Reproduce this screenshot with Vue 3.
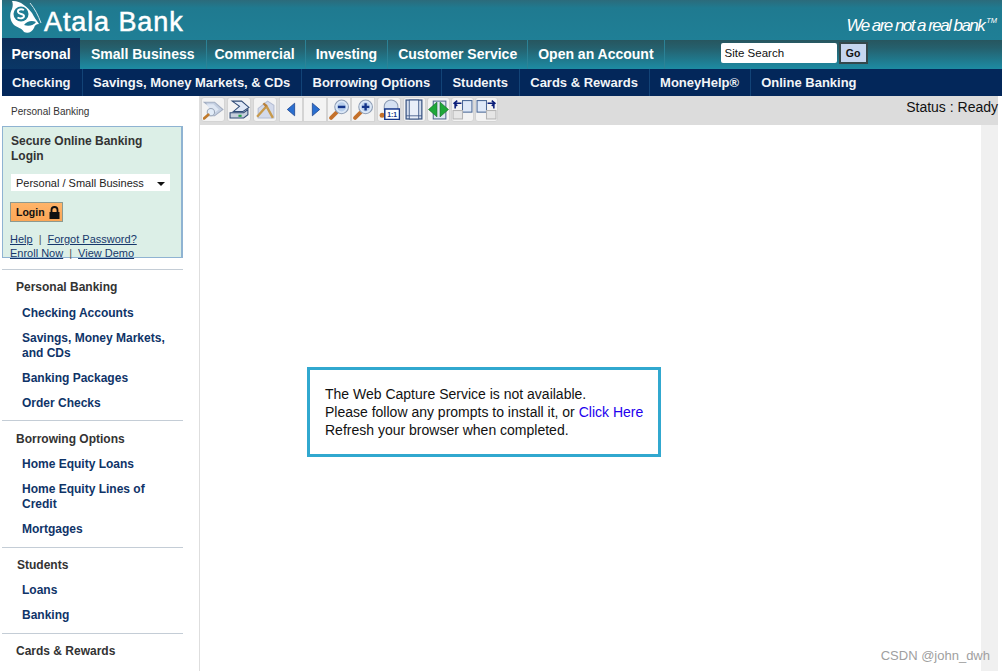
<script setup>
const topTabs = ['Small Business', 'Commercial', 'Investing', 'Customer Service', 'Open an Account']
const subTabs = ['Checking', 'Savings, Money Markets, & CDs', 'Borrowing Options', 'Students', 'Cards & Rewards', 'MoneyHelp®', 'Online Banking']
const sections = [
  { title: 'Personal Banking', links: ['Checking Accounts', 'Savings, Money Markets, and CDs', 'Banking Packages', 'Order Checks'] },
  { title: 'Borrowing Options', links: ['Home Equity Loans', 'Home Equity Lines of Credit', 'Mortgages'] },
  { title: 'Students', links: ['Loans', 'Banking'] },
  { title: 'Cards & Rewards', links: [] }
]
</script>

<template>
  <div class="page">
    <header class="masthead">
      <div class="brand">
        <svg class="logo" width="34" height="34" viewBox="0 0 34 34">
          <path d="M3 1 C10 0 18 6 23 13 C25 17 28 21 30 24 C27 24 26 25 25 28 C23 32 19 34 15 32 C13 28 9 28 5 25 C1 21 0 14 3 9 C4 6 4 3 3 1 Z" fill="#fff"/>
          <circle cx="12" cy="14" r="7.500" fill="#1f7d94"/>
          <path d="M15 10 C12 8.500 8.500 9.500 9 12 C9.500 14.500 15 13.500 15 16 C15 18.500 11 19 8.500 17.500" fill="none" stroke="#fff" stroke-width="1.900"/>
          <path d="M15 25 C18 21 23 20 27 22 C25 25 20 27 15 25 Z" fill="#1f7d94"/>
          <path d="M21 3 C26 9 29 15 32 23" fill="none" stroke="#d7e8ec" stroke-width="1"/>
        </svg>
        <span class="brand-name">Atala Bank</span>
      </div>
      <div class="tagline">We are not a real bank<sup>TM</sup></div>
    </header>

    <nav class="tabs">
      <a class="tab active">Personal</a>
      <a v-for="t in topTabs" :key="t" class="tab">{{ t }}</a>
      <form class="search" @submit.prevent>
        <span class="search-box">Site Search</span>
        <span class="go">Go</span>
      </form>
    </nav>

    <nav class="subtabs">
      <a v-for="t in subTabs" :key="t" class="subtab">{{ t }}</a>
    </nav>

    <div class="body">
      <aside class="sidebar">
        <div class="crumb">Personal Banking</div>
        <section class="login">
          <h2>Secure Online Banking Login</h2>
          <div class="select"><span>Personal / Small Business</span><i class="caret"></i></div>
          <button class="login-btn" type="button">
            Login
            <svg width="11" height="13" viewBox="0 0 11 13"><path d="M2.500 6 V4 a3 3 0 0 1 6 0 V6" fill="none" stroke="#111" stroke-width="1.800"/><rect x="0.500" y="6" width="10" height="7" fill="#111"/></svg>
          </button>
          <div class="login-links">
            <div><a>Help</a><span class="pipe">|</span><a>Forgot Password?</a></div>
            <div><a>Enroll Now</a><span class="pipe">|</span><a>View Demo</a></div>
          </div>
        </section>
        <div v-for="s in sections" :key="s.title" class="menu">
          <div class="menu-title">{{ s.title }}</div>
          <a v-for="l in s.links" :key="l" class="menu-link">{{ l }}</a>
        </div>
      </aside>

      <main class="viewer">
        <div class="toolbar">
          <div class="tools">
            <button class="tool" type="button"><svg viewBox="0 0 20 20"><path d="M1 3 H11 L19 10 L11 16 H5 L10 10 Z" fill="#c5d0e2" stroke="#a3aec2"/><path d="M3 5 H10 L15 10 L10 14" fill="#dfe7f3"/><circle cx="7.500" cy="12.500" r="3.500" fill="#e2ecf8" stroke="#9aa6b8"/><path d="M5 15 L1 18.500" stroke="#c07a2c" stroke-width="2.600" stroke-linecap="round"/></svg></button>
            <button class="tool" type="button"><svg viewBox="0 0 20 20"><path d="M3 2 H12 L19 8 L13 12 H4 L10 7 Z" fill="#dfe8f6" stroke="#2f4a75"/><path d="M1 13 H14 L18 10 V15 L14 18 H1 Z" fill="#c6cfdc" stroke="#2f4a75"/><rect x="9" y="15" width="3" height="2" fill="#22a04a"/></svg></button>
            <button class="tool" type="button"><svg viewBox="0 0 20 20"><path d="M3 18 V9 L12 2 L18 6 V18 Z" fill="#d3daeb" stroke="#b4bdd3"/><path d="M2 17 L11 7 L17 18" fill="none" stroke="#c79a4c" stroke-width="2.200"/><path d="M11 7 L8 4" stroke="#b9803a" stroke-width="2.200"/></svg></button>
            <div class="tool-pair">
              <button class="tool" type="button"><svg viewBox="0 0 20 20"><path d="M13 4 V16 L6 10 Z" fill="#2a6fd0" stroke="#163d8a" stroke-width=".7"/></svg></button>
              <button class="tool" type="button"><svg viewBox="0 0 20 20"><path d="M7 4 V16 L14 10 Z" fill="#2a6fd0" stroke="#163d8a" stroke-width=".7"/></svg></button>
              <button class="tool" type="button"><svg viewBox="0 0 20 20"><path d="M7 13 L2 18" stroke="#c4702a" stroke-width="3.600" stroke-linecap="round"/><circle cx="12" cy="7.500" r="6.500" fill="#dce8f7" stroke="#8c9cb4"/><circle cx="12" cy="7.500" r="4.300" fill="#b9cfec"/><rect x="8.500" y="6.400" width="7" height="2.300" fill="#14358a"/></svg></button>
              <button class="tool" type="button"><svg viewBox="0 0 20 20"><path d="M7 13 L2 18" stroke="#c4702a" stroke-width="3.600" stroke-linecap="round"/><circle cx="12" cy="7.500" r="6.500" fill="#dce8f7" stroke="#8c9cb4"/><circle cx="12" cy="7.500" r="4.300" fill="#b9cfec"/><path d="M8.500 7.500 H15.500 M12 4 V11" stroke="#14358a" stroke-width="2.300"/></svg></button>
            </div>
            <button class="tool" type="button"><svg viewBox="0 0 20 20"><path d="M5 10 V7 a6.500 6 0 0 1 13 0 V10 Z" fill="#d5e1f2" stroke="#8c9cb4"/><circle cx="3" cy="15.500" r="2.400" fill="#c4702a"/><rect x="5.500" y="9.500" width="14" height="10" fill="#fff" stroke="#14358a" stroke-width="1.400"/><text x="12.500" y="17.500" class="ratio">1:1</text></svg></button>
            <div class="tool-run">
              <button class="tool" type="button"><svg viewBox="0 0 20 20"><rect x="2" y="1" width="15" height="18" fill="#d4deee" stroke="#3b5684" stroke-width="1.200"/><rect x="5" y="1" width="9" height="18" fill="#e9eff8" stroke="#3b5684" stroke-width=".8"/><path d="M2 16 H17" stroke="#3b5684" stroke-width=".8"/></svg></button>
              <button class="tool" type="button"><svg viewBox="0 0 20 20"><rect x="5" y="2" width="12" height="17" fill="#dfe6f2" stroke="#50688f"/><path d="M8.500 3 V17 L0.500 10 Z" fill="#1ea83a" stroke="#0c6a20" stroke-width=".6"/><path d="M11.500 3 V17 L19.500 10 Z" fill="#1ea83a" stroke="#0c6a20" stroke-width=".6"/></svg></button>
              <button class="tool" type="button"><svg viewBox="0 0 20 20"><rect x="10" y="1.500" width="9" height="11" fill="#dfe9f8" stroke="#4a6796"/><rect x="1" y="11" width="9" height="8" fill="#e6e6e6" stroke="#b5b5b5"/><path d="M9 4 H3 M5 1.500 L2 4 L5 6.500 M3 4 V9" fill="none" stroke="#0b1f7a" stroke-width="1.500"/></svg></button>
              <button class="tool" type="button"><svg viewBox="0 0 20 20"><rect x="1" y="1.500" width="9" height="11" fill="#dfe9f8" stroke="#4a6796"/><rect x="10" y="11" width="9" height="8" fill="#e6e6e6" stroke="#b5b5b5"/><path d="M11 4 H17 M15 1.500 L18 4 L15 6.500 M17 4 V9" fill="none" stroke="#0b1f7a" stroke-width="1.500"/></svg></button>
            </div>
          </div>
          <div class="status">Status : Ready</div>
        </div>
        <div class="stage">
          <div class="canvas">
            <div class="notice">
              The Web Capture Service is not available.<br>
              Please follow any prompts to install it, or <a>Click Here</a><br>
              Refresh your browser when completed.
            </div>
          </div>
          <div class="scrollbar"></div>
        </div>
      </main>
    </div>
    <div class="watermark">CSDN @john_dwh</div>
  </div>
</template>

<style>
html, body { margin: 0; background: #fff; overflow: hidden; }
</style>

<style scoped>
.page {
  position: relative;
  width: 1000px;
  height: 671px;
  padding-left: 2px;
  overflow: hidden;
  background: #fff;
  font-family: "Liberation Sans", Arial, sans-serif;
}
.masthead {
  height: 40px;
  display: flex;
  justify-content: space-between;
  background: linear-gradient(#2b6b7b 0, #1f7a90 8px, #1f7f96 100%);
  color: #fff;
}
.brand { display: flex; align-items: flex-start; }
.logo { margin: 0 0 0 7px; }
.brand-name {
  margin: 7px 0 0 1px;
  font-size: 27px;
  line-height: 31px;
  letter-spacing: 0.9px;
  -webkit-text-stroke: 0.5px #fff;
}
.tagline {
  margin: 16px 5px 0 0;
  font-size: 17px;
  line-height: 19px;
  font-style: italic;
  letter-spacing: -1.55px;
}
.tagline sup { font-size: 7.5px; line-height: 0; font-style: italic; letter-spacing: 0; vertical-align: 8px; margin-left: 2px; }
.tabs {
  height: 29px;
  display: flex;
  background: linear-gradient(#27565f 0, #25606d 8px, #1f7d92 22px, #1d8ba3 100%);
}
.tab {
  display: flex;
  align-items: center;
  padding: 0 10px 2px;
  border-right: 1px solid #2b8296;
  color: #fff;
  font-size: 14px;
  font-weight: bold;
  white-space: nowrap;
}
.tab.active {
  box-sizing: border-box;
  width: 78px;
  margin-top: -2px;
  padding: 0;
  justify-content: center;
  border-right: 0;
  background: linear-gradient(#0d2d58, #0a3766);
}
.tab:nth-child(2) { padding: 0 11px 2px; }
.tab:nth-child(3) { padding-left: 8px; }
.search { display: flex; align-items: flex-start; gap: 2px; margin-left: 56px; padding-top: 2px; }
.search-box {
  box-sizing: border-box;
  width: 116px;
  height: 20px;
  margin-top: 1px;
  padding-left: 4px;
  background: #fff;
  border-radius: 2px;
  color: #111;
  font-size: 11.5px;
  line-height: 20px;
}
.go {
  box-sizing: border-box;
  width: 29px;
  height: 22px;
  background: #c6d6f0;
  border: 2px solid #35484c;
  color: #111;
  font-size: 10.5px;
  font-weight: bold;
  line-height: 18px;
  text-align: center;
}
.subtabs {
  height: 27px;
  display: flex;
  background: #03275a;
}
.subtab {
  display: flex;
  align-items: center;
  padding: 0 10.6px 1px;
  border-right: 1px solid #124377;
  color: #f2f5f8;
  font-size: 13px;
  font-weight: bold;
  white-space: nowrap;
}
.subtab:first-child { padding: 0 11px 1px 10px; }
.subtab:last-child { border-right: 0; }
.body { display: flex; height: 575px; }
.sidebar { width: 181px; flex: none; }
.crumb {
  height: 30px;
  padding: 1px 0 0 9px;
  box-sizing: border-box;
  color: #333;
  font-size: 10px;
  line-height: 29px;
}
.login {
  box-sizing: border-box;
  height: 132px;
  padding: 7px 11px 0 8px;
  background: #dcefe7;
  border: 1px solid #8fb3d2;
  border-width: 1px 2px 1px 1px;
}
.login h2 {
  margin: 0;
  color: #333;
  font-size: 12px;
  line-height: 15px;
  font-weight: bold;
}
.select {
  height: 17px;
  margin-top: 10px;
  padding: 0 5px;
  display: flex;
  align-items: center;
  justify-content: space-between;
  background: #fff;
  color: #222;
  font-size: 11px;
}
.caret { border: 4px solid transparent; border-top-color: #111; border-bottom: 0; margin: 2px 0 0; }
.login-btn {
  display: flex;
  align-items: center;
  gap: 4px;
  width: 53px;
  height: 20px;
  margin: 11px 0 0 -1px;
  padding: 0 0 0 5px;
  background: linear-gradient(#ffb469, #fba656);
  border: 1px solid #8d9a8f;
  color: #111;
  font: bold 10.5px "Liberation Sans", sans-serif;
}
.login-links { margin: 10px 0 0 -1px; font-size: 11px; line-height: 14px; color: #16376b; white-space: nowrap; }
.login-links a { text-decoration: underline; }
.pipe { margin: 0 6px; color: #555; }
.menu {
  display: flex;
  flex-direction: column;
  padding: 5px 0;
  border-top: 1px solid #c4cdd6;
  font-size: 12px;
  font-weight: bold;
  line-height: 15px;
}
.login + .menu { margin-top: 11px; padding: 6px 0 4px; }
.menu:nth-child(4) { padding: 6px 0 5px; }
.menu:nth-child(5) .menu-title { padding-left: 15px; }
.menu-title { padding: 5px 14px; color: #333; }
.login + .menu .menu-title { padding: 4px 14px 6px; }
.menu-link { padding: 5px 14px 5px 20px; color: #0f3468; }
.viewer { flex: none; width: 799px; margin-left: 16px; border-left: 1px solid #dedede; box-sizing: border-box; display: flex; flex-direction: column; }
.toolbar {
  height: 29px;
  flex: none;
  display: flex;
  justify-content: space-between;
  background: #dcdcdc;
}
.tools { display: flex; gap: 2px; padding: 1px 0 0 1px; align-items: flex-start; }
.tool-pair { display: flex; }
.tool-run { display: flex; gap: 1px; }
.tool {
  box-sizing: border-box;
  width: 24px;
  height: 25px;
  padding: 0;
  display: flex;
  align-items: center;
  justify-content: center;
  background: #f3f3f3;
  border: 1px solid #d4d4d4;
  border-radius: 3px;
}
.tool-run .tool { width: 23px; }
.tool-pair .tool { border-radius: 0; }
.tool svg { width: 21px; height: 21px; display: block; flex: none; }
.ratio { font: bold 6.5px "Liberation Sans", sans-serif; fill: #14358a; text-anchor: middle; }
.status { color: #111; font-size: 14px; line-height: 22px; }
.stage { flex: 1; display: flex; min-height: 0; }
.canvas { flex: 1; padding: 242px 0 0 107px; }
.notice {
  box-sizing: border-box;
  width: 354px;
  height: 90px;
  padding: 15px 15px;
  border: 3px solid #31a8cf;
  color: #111;
  font-size: 14px;
  line-height: 18px;
  white-space: nowrap;
}
.notice a { color: #2200ee; }
.scrollbar { width: 17px; flex: none; background: #f0f0f0; }
.watermark {
  position: absolute;
  right: 12px;
  bottom: 8px;
  color: #a0a0a0;
  font-size: 13px;
  line-height: 15px;
}
</style>
